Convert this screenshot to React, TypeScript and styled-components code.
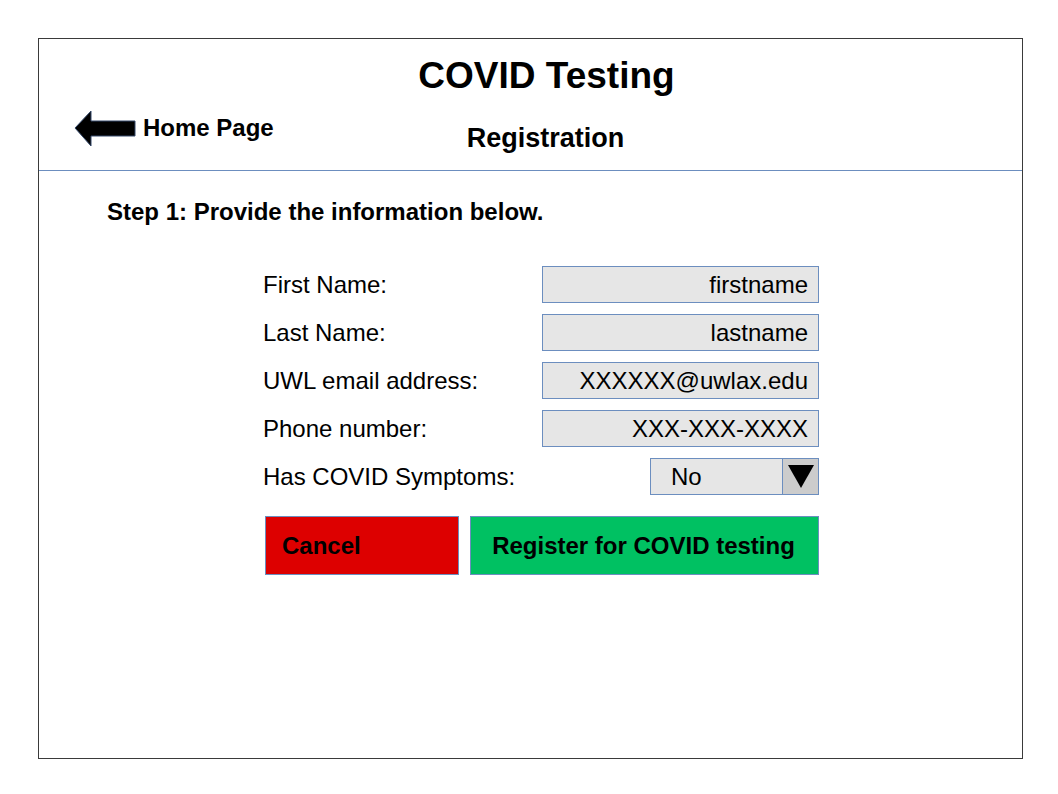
import React from "react";
import styled, { createGlobalStyle } from "styled-components";

const GlobalStyle = createGlobalStyle`
  html, body {
    margin: 0;
    padding: 0;
    background: #ffffff;
  }
  body {
    font-family: "Liberation Sans", Arial, sans-serif;
    color: #000000;
  }
  * { box-sizing: border-box; }
`;

const Page = styled.div`
  width: 1058px;
  height: 794px;
  padding: 38px 0 0 38px;
`;

const Frame = styled.div`
  width: 985px;
  height: 721px;
  border: 1px solid #3a3a3a;
  display: flex;
  flex-direction: column;
`;

const Header = styled.header`
  height: 132px;
  border-bottom: 1px solid #6c8ebf;
  padding: 17px 0 0 32px;
  display: flex;
  flex-direction: column;
`;

const Title = styled.h1`
  margin: 0;
  font-size: 37px;
  line-height: 40px;
  font-weight: 700;
  text-align: center;
`;

const SubRow = styled.div`
  margin-top: 14px;
  display: grid;
  grid-template-columns: 1fr auto 1fr;
  align-items: start;
`;

const HomeLink = styled.a`
  justify-self: start;
  margin-left: 3px;
  height: 36px;
  display: flex;
  align-items: center;
  gap: 7px;
  font-size: 24px;
  line-height: 28px;
  font-weight: 700;
  color: #000;
  text-decoration: none;
  cursor: pointer;
`;

const Subtitle = styled.h2`
  margin: 12px 2px 0 0;
  font-size: 27px;
  line-height: 32px;
  font-weight: 700;
`;

const Body = styled.main`
  padding: 27px 0 0 68px;
  display: flex;
  flex-direction: column;
`;

const StepText = styled.p`
  margin: 0;
  font-size: 24px;
  line-height: 28px;
  font-weight: 700;
`;

const FormArea = styled.form`
  margin: 40px 0 0 156px;
  display: flex;
  flex-direction: column;
`;

const FormGrid = styled.div`
  display: grid;
  grid-template-columns: 279px 277px;
  grid-auto-rows: 37px;
  row-gap: 11px;
  align-items: center;
`;

const Label = styled.label`
  font-size: 24px;
  line-height: 28px;
`;

const Field = styled.input`
  width: 277px;
  height: 37px;
  border: 1px solid #6c8ebf;
  background: #e6e6e6;
  padding: 0 10px 0 10px;
  margin: 0;
  font-family: "Liberation Sans", Arial, sans-serif;
  font-size: 24px;
  color: #000;
  text-align: right;
  outline: none;
  border-radius: 0;
`;

const Select = styled.div`
  justify-self: end;
  width: 169px;
  height: 37px;
  border: 1px solid #6c8ebf;
  background: #e6e6e6;
  display: flex;
  align-items: stretch;
`;

const SelectValue = styled.span`
  flex: 1;
  padding-left: 20px;
  font-size: 24px;
  line-height: 35px;
`;

const SelectArrow = styled.span`
  width: 36px;
  border-left: 1px solid #6c8ebf;
  background: #cccccc;
  display: flex;
  align-items: center;
  justify-content: center;
`;

const ButtonRow = styled.div`
  margin: 21px 0 0 2px;
  display: flex;
  gap: 11px;
`;

const Button = styled.button<{ $bg: string; $w: number; $align: "left" | "center" }>`
  width: ${(p) => p.$w}px;
  height: 59px;
  border: 1px solid #6c8ebf;
  background: ${(p) => p.$bg};
  padding: ${(p) => (p.$align === "left" ? "0 0 0 16px" : "0 2px 0 0")};
  margin: 0;
  text-align: ${(p) => p.$align};
  font-family: "Liberation Sans", Arial, sans-serif;
  font-size: 24px;
  font-weight: 700;
  color: #000;
  border-radius: 0;
  cursor: pointer;
`;

const BackArrow = () => (
  <svg width="62" height="38" viewBox="0 0 62 38" style={{ display: "block", marginTop: "2px" }}>
    <polygon
      points="1,18 17,1 17,11 61,11 61,26 17,26 17,36"
      fill="#000"
      stroke="#34496b"
      strokeWidth="1"
      strokeLinejoin="miter"
    />
  </svg>
);

const DownTriangle = () => (
  <svg width="26" height="23" viewBox="0 0 26 23" style={{ display: "block" }}>
    <polygon points="0,0 26,0 13,23" fill="#000" />
  </svg>
);

const fields = [
  { label: "First Name:", value: "firstname" },
  { label: "Last Name:", value: "lastname" },
  { label: "UWL email address:", value: "XXXXXX@uwlax.edu" },
  { label: "Phone number:", value: "XXX-XXX-XXXX" },
];

export default function App() {
  return (
    <>
      <GlobalStyle />
      <Page>
        <Frame>
          <Header>
            <Title>COVID Testing</Title>
            <SubRow>
              <HomeLink>
                <BackArrow />
                <span>Home Page</span>
              </HomeLink>
              <Subtitle>Registration</Subtitle>
            </SubRow>
          </Header>
          <Body>
            <StepText>Step 1: Provide the information below.</StepText>
            <FormArea onSubmit={(e) => e.preventDefault()}>
              <FormGrid>
                {fields.map((f) => (
                  <React.Fragment key={f.label}>
                    <Label>{f.label}</Label>
                    <Field readOnly value={f.value} />
                  </React.Fragment>
                ))}
                <Label>Has COVID Symptoms:</Label>
                <Select>
                  <SelectValue>No</SelectValue>
                  <SelectArrow>
                    <DownTriangle />
                  </SelectArrow>
                </Select>
              </FormGrid>
              <ButtonRow>
                <Button type="button" $bg="#dd0000" $w={194} $align="left">
                  Cancel
                </Button>
                <Button type="submit" $bg="#00c162" $w={349} $align="center">
                  Register for COVID testing
                </Button>
              </ButtonRow>
            </FormArea>
          </Body>
        </Frame>
      </Page>
    </>
  );
}
